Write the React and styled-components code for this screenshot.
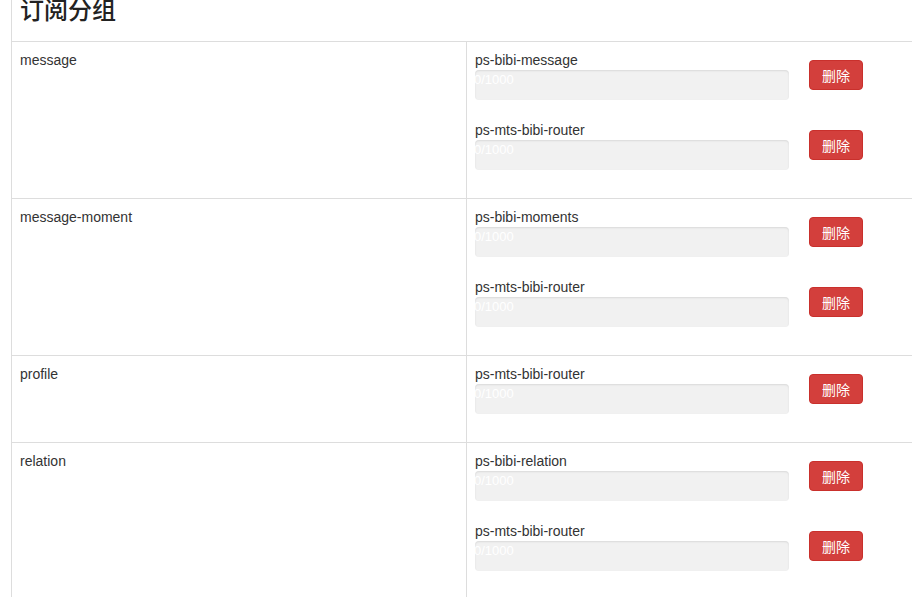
import React from 'react';
import styled, { createGlobalStyle } from 'styled-components';

const groups = [
	{ name: 'message', topics: ['ps-bibi-message', 'ps-mts-bibi-router'] },
	{ name: 'message-moment', topics: ['ps-bibi-moments', 'ps-mts-bibi-router'] },
	{ name: 'profile', topics: ['ps-mts-bibi-router'] },
	{ name: 'relation', topics: ['ps-bibi-relation', 'ps-mts-bibi-router'] },
];

const GlobalStyle = createGlobalStyle`
	html, body {
		margin: 0;
		padding: 0;
		background: #fff;
		overflow: hidden;
	}
	body {
		font-family: 'Liberation Sans', 'Noto Sans CJK SC', Arial, sans-serif;
		font-size: 14px;
		line-height: 20px;
		color: #333;
	}
`;

const App = () => {
	return (
		<>
			<GlobalStyle />
			<Panel>
				<Header>
					<Title>订阅分组</Title>
				</Header>
				<Table>
					{groups.map((group) => (
						<Row key={group.name}>
							<NameCell>{group.name}</NameCell>
							<TopicCell>
								{group.topics.map((topic, i) => (
									<Topic key={i}>
										<TopicBody>
											<TopicName>{topic}</TopicName>
											<Progress>
												<ProgressText>0/1000</ProgressText>
											</Progress>
										</TopicBody>
										<DeleteButton type='button'>删除</DeleteButton>
									</Topic>
								))}
							</TopicCell>
						</Row>
					))}
				</Table>
			</Panel>
		</>
	);
};

export default App;

const Panel = styled.div`
	margin-left: 11px;
	width: 1000px;
	min-height: 620px;
	border-left: 1px solid #ddd;
`;

const Header = styled.div`
	height: 41px;
	display: flex;
	align-items: flex-end;
	padding: 0 0 0 8px;
	box-sizing: border-box;
`;

const Title = styled.h3`
	margin: 0 0 17px;
	font-family: 'Liberation Sans', 'Noto Sans CJK SC', sans-serif;
	font-size: 24px;
	line-height: 26px;
	font-weight: 500;
	color: #222;
`;

const Table = styled.div`
	display: flex;
	flex-direction: column;
`;

const Row = styled.div`
	display: grid;
	grid-template-columns: 455px 1fr;
	border-top: 1px solid #ddd;
`;

const NameCell = styled.div`
	padding: 8px;
	border-right: 1px solid #ddd;
`;

const TopicCell = styled.div`
	padding: 8px;
	display: flex;
	flex-direction: column;
`;

const Topic = styled.div`
	display: flex;
	align-items: center;
	gap: 20px;
	margin-bottom: 20px;
`;

const TopicBody = styled.div`
	width: 314px;
	display: flex;
	flex-direction: column;
`;

const TopicName = styled.div`
	height: 20px;
`;

const Progress = styled.div`
	height: 30px;
	background: #f1f1f1;
	border-radius: 4px;
	box-shadow: inset 0 1px 2px rgba(0, 0, 0, 0.1);
	overflow: hidden;
`;

const ProgressText = styled.div`
	margin-left: -1px;
	font-size: 13px;
	line-height: 20px;
	color: #fff;
	white-space: nowrap;
`;

const DeleteButton = styled.button`
	width: 54px;
	height: 30px;
	padding: 0;
	font-family: 'Liberation Sans', 'Noto Sans CJK SC', sans-serif;
	font-size: 14px;
	color: #fff;
	background: #d33f3c;
	border: 1px solid #c9302c;
	border-radius: 4px;
	cursor: pointer;
`;
